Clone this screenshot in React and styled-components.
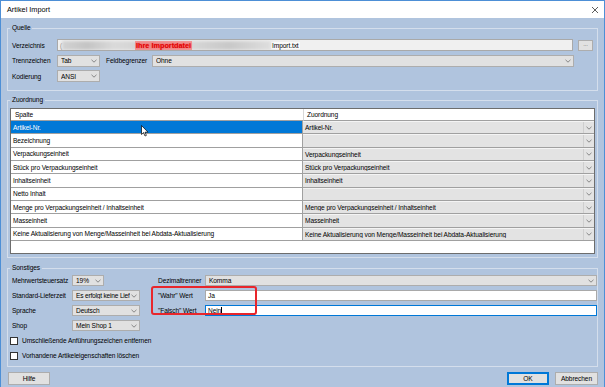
import React from "react";
import styled, { createGlobalStyle } from "styled-components";

const GlobalStyle = createGlobalStyle`
  html, body { margin: 0; padding: 0; background: #fff; }
  body {
    font-family: "Liberation Sans", Arial, sans-serif;
    font-size: 6.6px;
    letter-spacing: -0.1px;
    color: #000;
  }
  * { box-sizing: border-box; }
`;

const Window = styled.div`
  width: 605px;
  height: 387px;
  border: 1px solid #4d8fd6;
  border-bottom: none;
  background: #b0c4de;
  display: flex;
  flex-direction: column;
  overflow: hidden;
`;

const TitleBar = styled.div`
  height: 17px;
  flex: none;
  background: #fff;
  display: flex;
  align-items: center;
  justify-content: space-between;
  padding: 0 5px 0 6px;
  font-size: 7.3px;
  letter-spacing: 0;
`;

const Body = styled.div`
  flex: 1;
  display: flex;
  flex-direction: column;
  padding: 0 6px;
`;

const Group = styled.fieldset`
  margin: ${({ $top }) => $top}px 0 0 0;
  padding: ${({ $pad }) => $pad};
  border: 1px solid #d4deec;
  min-width: 0;
  position: relative;
`;

const Legend = styled.legend`
  padding: 0 2px;
  line-height: 10px;
`;

const Row = styled.div`
  display: flex;
  align-items: center;
  height: 12px;
  gap: ${({ $gap }) => $gap || 0}px;
  margin-top: ${({ $mt }) => $mt || 0}px;
`;

const Label = styled.span`
  width: ${({ $w }) => $w}px;
  flex: none;
  white-space: nowrap;
`;

const ComboBox = styled.div`
  height: ${({ $h }) => $h || 12}px;
  width: ${({ $w }) => ($w ? `${$w}px` : "auto")};
  flex: ${({ $w }) => ($w ? "none" : 1)};
  margin-right: ${({ $mr }) => $mr || 0}px;
  background: #e1e1e1;
  border: 1px solid #adadad;
  display: flex;
  align-items: center;
  gap: 1px;
  padding: 0 2px 0 3px;
  white-space: nowrap;
  overflow: hidden;
`;

const ComboText = styled.span`
  flex: 1;
  min-width: 0;
  overflow: hidden;
  letter-spacing: ${({ $tight }) => ($tight ? "-0.2px" : "inherit")};
`;

const TextBox = styled.div`
  height: ${({ $h }) => $h || 12}px;
  flex: 1;
  background: ${({ $bg }) => $bg || "#fff"};
  border: 1px solid ${({ $focus }) => ($focus ? "#0078d7" : "#a9a9a9")};
  display: flex;
  align-items: center;
  padding: 0 2px;
  white-space: nowrap;
  overflow: hidden;
  position: relative;
`;

const Caret = styled.span`
  display: inline-block;
  width: 1px;
  height: 8px;
  background: #000;
`;

const Blur = styled.span`
  width: 209px;
  height: 9px;
  flex: none;
  background: linear-gradient(90deg, #d2d2d2 0%, #c4c4c4 12%, #dadada 25%, #cfcfcf 45%, #d8d8d8 60%, #c8c8c8 80%, #dedede 100%);
  filter: blur(1.5px);
`;

const Secret = styled.span`
  position: absolute;
  left: 77px;
  top: 1px;
  color: #e00000;
  font-weight: bold;
  font-size: 7.3px;
  letter-spacing: 0;
  background: rgba(255, 90, 90, 0.55);
  text-shadow: 0 0 2px #ff4040;
  padding: 0 1px;
`;

const FileName = styled.span`
  background: #fafafa;
  padding: 0 1px;
`;

const SmallButton = styled.div`
  width: 15px;
  height: 11px;
  flex: none;
  background: #e1e1e1;
  border: 1px solid #adadad;
  display: flex;
  align-items: center;
  justify-content: center;
  color: #666;
  font-size: 6px;
  line-height: 1;
  padding-bottom: 3px;
`;

const Table = styled.div`
  height: 146px;
  border: 1px solid #6d6d6d;
  background: #fff;
  display: grid;
  grid-template-columns: 292px 1fr;
  grid-auto-rows: 13.33px;
  grid-template-rows: 12px;
  align-content: start;
`;

const HeadCell = styled.div`
  background: #fff;
  border-bottom: 1px solid #a0a0a0;
  border-left: ${({ $first }) => ($first ? "none" : "1px solid #d8d8d8")};
  padding-left: ${({ $first }) => ($first ? 4 : 3)}px;
  display: flex;
  align-items: center;
`;

const Cell = styled.div`
  background: ${({ $sel }) => ($sel ? "#0078d7" : "#fff")};
  color: ${({ $sel }) => ($sel ? "#fff" : "#000")};
  border-bottom: 1px solid #a0a0a0;
  border-right: 1px solid #a0a0a0;
  padding-left: 2px;
  display: flex;
  align-items: center;
  white-space: nowrap;
`;

const ComboCell = styled.div`
  background: #e3e3e3;
  border-bottom: 1px solid #a0a0a0;
  border-top: 1px solid #f4f4f4;
  display: flex;
  align-items: center;
  white-space: nowrap;
`;

const ComboCellText = styled.span`
  flex: 1;
  padding-left: 2px;
  overflow: hidden;
`;

const DropButton = styled.span`
  width: 11px;
  height: 100%;
  border-left: 1px solid #cfcfcf;
  display: flex;
  align-items: center;
  justify-content: center;
`;

const Cursor = styled.svg`
  position: absolute;
  left: 133px;
  top: 20px;
`;

const Grid = styled.div`
  display: grid;
  grid-template-columns: 60px 68px 18px 47px 1fr;
  grid-template-rows: repeat(6, 11px);
  row-gap: 4px;
  align-items: center;
  padding: 2px 0 5px 2px;
  margin-right: -2px;
  position: relative;
  white-space: nowrap;
`;

const Check = styled.label`
  grid-column: 1 / 5;
  display: flex;
  align-items: center;
  gap: 4px;
  margin-left: -2px;
  white-space: nowrap;
`;

const Box = styled.span`
  width: 8px;
  height: 8px;
  background: #fff;
  border: 1px solid #333;
  flex: none;
`;

const Highlight = styled.div`
  position: absolute;
  left: 141px;
  top: 13px;
  width: 106px;
  height: 29px;
  border: 2px solid #e8262b;
  border-radius: 3px;
`;

const Footer = styled.div`
  display: flex;
  align-items: center;
  margin-top: 5px;
  padding-left: 1px;
  gap: 6px;
`;

const Button = styled.div`
  width: ${({ $w }) => $w}px;
  height: 13px;
  background: #e1e1e1;
  border: 1px solid ${({ $default }) => ($default ? "#0078d7" : "#adadad")};
  box-shadow: ${({ $default }) => ($default ? "inset 0 0 0 1px #0078d7" : "none")};
  display: flex;
  align-items: center;
  justify-content: center;
  margin-left: ${({ $ml }) => $ml || 0}px;
`;

const Chevron = () => (
  <svg width="6" height="4" viewBox="0 0 6 4" style={{ flex: "none" }}>
    <path d="M0.5 0.8 L3 3.2 L5.5 0.8" fill="none" stroke="#707070" strokeWidth="0.8" />
  </svg>
);

const Select = ({ value, tight, ...rest }) => (
  <ComboBox {...rest}>
    <ComboText $tight={tight}>{value}</ComboText>
    <Chevron />
  </ComboBox>
);

const rows = [
  ["Artikel-Nr.", "Artikel-Nr.", true],
  ["Bezeichnung", ""],
  ["Verpackungseinheit", "Verpackungseinheit"],
  ["Stück pro Verpackungseinheit", "Stück pro Verpackungseinheit"],
  ["Inhaltseinheit", "Inhaltseinheit"],
  ["Netto Inhalt", ""],
  ["Menge pro Verpackungseinheit / Inhaltseinheit", "Menge pro Verpackungseinheit / Inhaltseinheit"],
  ["Masseinheit", "Masseinheit"],
  ["Keine Aktualisierung von Menge/Masseinheit bei Abdata-Aktualisierung", "Keine Aktualisierung von Menge/Masseinheit bei Abdata-Aktualisierung"],
];

export default function App() {
  return (
    <>
      <GlobalStyle />
      <Window>
        <TitleBar>
          <span>Artikel Import</span>
          <svg width="8" height="8" viewBox="0 0 8 8">
            <path d="M1 1 L7 7 M7 1 L1 7" stroke="#333" strokeWidth="0.8" />
          </svg>
        </TitleBar>
        <Body>
          <Group $top={5} $pad="0 4px 8px 4px">
            <Legend style={{ marginLeft: -2 }}>Quelle</Legend>
            <Row $mt={6} $gap={5}>
              <Label $w={40}>Verzeichnis</Label>
              <TextBox $bg="#f0f0f0">
                <span style={{ color: "#888" }}>(</span>
                <Blur />
                <Secret>Ihre Importdatei</Secret>
                <FileName>Import.txt</FileName>
              </TextBox>
              <SmallButton>...</SmallButton>
            </Row>
            <Row $mt={3.5} $gap={6}>
              <Label $w={39}>Trennzeichen</Label>
              <Select value="Tab" $w={43} />
              <Label $w={40}>Feldbegrenzer</Label>
              <Select value="Ohne" $mr={19} />
            </Row>
            <Row $mt={3.5} $gap={6}>
              <Label $w={39}>Kodierung</Label>
              <Select value="ANSI" $w={43} />
            </Row>
          </Group>

          <Group $top={4} $pad="0 2px 3px 2px">
            <Legend>Zuordnung</Legend>
            <Table style={{ marginTop: 3 }}>
              <HeadCell $first>Spalte</HeadCell>
              <HeadCell>Zuordnung</HeadCell>
              {rows.map(([a, b, sel]) => (
                <React.Fragment key={a}>
                  <Cell $sel={sel}>{a}</Cell>
                  <ComboCell>
                    <ComboCellText>{b}</ComboCellText>
                    <DropButton>
                      <Chevron />
                    </DropButton>
                  </ComboCell>
                </React.Fragment>
              ))}
            </Table>
            <Cursor width="8" height="12" viewBox="0 0 8 12">
              <path d="M0.5 0.5 L0.5 9.5 L2.6 7.6 L4 11 L5.4 10.4 L4 7.2 L7 7.2 Z" fill="#fff" stroke="#000" strokeWidth="0.7" />
            </Cursor>
          </Group>

          <Group $top={5} $pad="0 2px">
            <Legend>Sonstiges</Legend>
            <Grid>
              <span>Mehrwertsteuersatz</span>
              <Select value="19%" $w={32} $h={11} />
              <span />
              <span>Dezimaltrenner</span>
              <Select value="Komma" $h={11} />

              <span>Standard-Lieferzeit</span>
              <Select value="Es erfolgt keine Lief" tight $h={11} />
              <span />
              <span>"Wahr" Wert</span>
              <TextBox $h={11}>Ja</TextBox>

              <span>Sprache</span>
              <Select value="Deutsch" $h={11} />
              <span />
              <span>"Falsch" Wert</span>
              <TextBox $h={11} $focus>
                Nein
                <Caret />
              </TextBox>

              <span>Shop</span>
              <Select value="Mein Shop 1" $h={11} />
              <span style={{ gridColumn: "3 / 6" }} />

              <Check>
                <Box />
                Umschließende Anführungszeichen entfernen
              </Check>
              <span style={{ gridColumn: "5" }} />
              <Check>
                <Box />
                Vorhandene Artikeleigenschaften löschen
              </Check>
              <span style={{ gridColumn: "5" }} />
              <Highlight />
            </Grid>
          </Group>

          <Footer>
            <Button $w={42}>Hilfe</Button>
            <Button $w={42} $default $ml={451}>OK</Button>
            <Button $w={43}>Abbrechen</Button>
          </Footer>
        </Body>
      </Window>
    </>
  );
}
